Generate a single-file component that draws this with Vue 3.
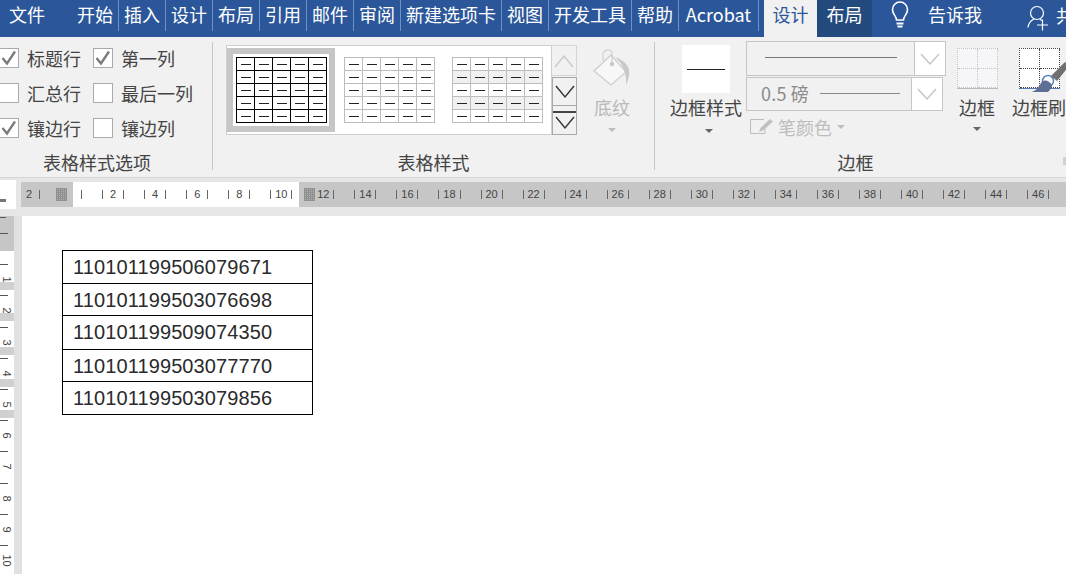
<script setup>
const tabsLeft = [
  { t: '开始', w: 47 }, { t: '插入', w: 47 }, { t: '设计', w: 47 }, { t: '布局', w: 47 },
  { t: '引用', w: 47 }, { t: '邮件', w: 47 }, { t: '审阅', w: 47 }, { t: '新建选项卡', w: 101 },
  { t: '视图', w: 47 }, { t: '开发工具', w: 83 }, { t: '帮助', w: 47 }, { t: 'Acrobat', w: 80 }
]
const rows = ['110101199506079671', '110101199503076698', '110101199509074350', '110101199503077770', '110101199503079856']
const heights = [33, 32, 34, 32, 33]
const hNums = ['2', '', ...Array.from({ length: 23 }, (_, i) => String((i + 1) * 2))]
const vNums = ['', '1', '2', '3', '4', '5', '6', '7', '8', '9', '10', '']
const bands = [282, 313, 347, 379, 410]
</script>

<template>
  <div class="app">
    <div class="tabs">
      <div class="file">文件</div>
      <div v-for="t in tabsLeft" :key="t.t" class="tab" :style="{ width: t.w + 'px' }">{{ t.t }}</div>
      <div class="tab-active">设计</div>
      <div class="tab-dark">布局</div>
      <svg class="bulb" width="20" height="28" viewBox="0 0 20 28" fill="none" stroke="#fff" stroke-width="1.6">
        <path d="M6.5 19c0-4-4-5.500-4-10.500a7.500 7.500 0 0 1 15 0c0 5-4 6.500-4 10.500z" />
        <path d="M6.500 22.500h7M7.500 25.500h5" stroke-width="2" />
      </svg>
      <div class="tell">告诉我</div>
      <svg class="person" width="26" height="26" viewBox="0 0 26 26" fill="none" stroke="#fff" stroke-width="1.200">
        <circle cx="10" cy="8" r="6.500" />
        <path d="M1 22.500C1.500 18 4 15.500 7 14M13 14.500l2 1M10 20h11M15.500 14.500v11" />
      </svg>
      <div class="share">共</div>
    </div>

    <div class="ribbon">
      <div class="grp grp-opts">
        <div class="opts">
          <div class="opt"><span class="cb"><svg width="18" height="18" viewBox="0 0 18 18"><path d="M2.500 9l4.500 5.500L15 2.500" fill="none" stroke="#7c7c7c" stroke-width="2.400" /></svg></span>标题行</div>
          <div class="opt"><span class="cb"><svg width="18" height="18" viewBox="0 0 18 18"><path d="M2.500 9l4.500 5.500L15 2.500" fill="none" stroke="#7c7c7c" stroke-width="2.400" /></svg></span>第一列</div>
          <div class="opt"><span class="cb"></span>汇总行</div>
          <div class="opt"><span class="cb"></span>最后一列</div>
          <div class="opt"><span class="cb"><svg width="18" height="18" viewBox="0 0 18 18"><path d="M2.500 9l4.500 5.500L15 2.500" fill="none" stroke="#7c7c7c" stroke-width="2.400" /></svg></span>镶边行</div>
          <div class="opt"><span class="cb"></span>镶边列</div>
        </div>
        <div class="grp-label">表格样式选项</div>
      </div>

      <div class="grp grp-styles">
        <div class="gallery-row">
          <div class="gallery">
            <div class="sel">
              <div class="mini black"><div v-for="i in 25" :key="i" class="mc"><i></i></div></div>
            </div>
            <div class="mini grey second"><div v-for="i in 25" :key="i" class="mc"><i></i></div></div>
            <div class="mini grey third banded"><div v-for="i in 25" :key="i" class="mc"><i></i></div></div>
          </div>
          <div class="scroll">
            <div class="sb sb-up"><svg width="22" height="14" viewBox="0 0 22 14"><path d="M2 13L11 2l9 11" fill="none" stroke="#c8c8c8" stroke-width="1.400" /></svg></div>
            <div class="sb sb-down"><svg width="22" height="14" viewBox="0 0 22 14"><path d="M2 1l9 11L20 1" fill="none" stroke="#333" stroke-width="1.400" /></svg></div>
            <div class="sb sb-more"><span class="more-bar"></span><svg width="22" height="14" viewBox="0 0 22 14"><path d="M2 1l9 11L20 1" fill="none" stroke="#333" stroke-width="1.400" /></svg></div>
          </div>
          <div class="shade">
            <svg class="shade-ic" width="38" height="40" viewBox="0 0 38 40" fill="none">
              <path d="M1 24L18 8l15 17-15 13z" fill="#f7f7f7" stroke="#cfcfcf" stroke-width="1.300" />
              <path d="M10 14V6q3-4 6-3 4 1 3 5v9" stroke="#cfcfcf" stroke-width="1.200" />
              <circle cx="19" cy="17" r="2.200" fill="#c8c8c8" />
              <path d="M22 10q10 3 14 12 1 8-3 16 1-13-6-23z" fill="#c9c9c9" />
            </svg>
            <div class="shade-t">底纹</div>
            <span class="arrow light"></span>
          </div>
        </div>
        <div class="grp-label">表格样式</div>
      </div>

      <div class="grp grp-border">
        <div class="border-row">
          <div class="bstyle">
            <div class="swatch"><span></span></div>
            <div class="bstyle-t">边框样式</div>
            <span class="arrow"></span>
          </div>
          <div class="combos">
            <div class="combo c1">
              <div class="combo-main"><span class="line l1"></span></div>
              <div class="combo-drop"><svg width="22" height="14" viewBox="0 0 22 14"><path d="M2 2l9 10 9-10" fill="none" stroke="#c4c4c4" stroke-width="1.400" /></svg></div>
            </div>
            <div class="combo c2">
              <div class="combo-main main2"><span class="weight">0.5 磅</span><span class="line l2"></span></div>
              <div class="combo-drop"><svg width="22" height="14" viewBox="0 0 22 14"><path d="M2 2l9 10 9-10" fill="none" stroke="#c4c4c4" stroke-width="1.400" /></svg></div>
            </div>
            <div class="pen">
              <svg width="24" height="18" viewBox="0 0 24 18" fill="none">
                <path d="M14 1.500H.5v14H15V9" stroke="#bdbdbd" stroke-width="1" />
                <path d="M9 14l1.500-4L20 1l3 2.500L13 12.500z" fill="#c0c0c0" />
              </svg>
              <span class="pen-t">笔颜色</span>
              <span class="arrow light small"></span>
            </div>
          </div>
          <div class="bigbtn b1">
            <div class="bicon dim">
              <i></i><i></i><i></i><i></i>
            </div>
            <div class="big-t">边框</div>
            <span class="arrow"></span>
          </div>
          <div class="bigbtn b2">
            <div class="bicon strong">
              <i></i><i></i><i></i><i></i>
              <svg class="brush" width="40" height="34" viewBox="0 0 40 34">
                <path d="M22 16L36 2l4 4-12 15z" fill="#707070" />
                <circle cx="19" cy="21" r="5.500" fill="#fff" stroke="#5b81bd" stroke-width="1.500" />
                <path d="M2 32c6-1 8-6 10-9 2-3 5-3 8-1s4 4 2 6c-1 2-2 3-3 4z" fill="#5d6f94" />
              </svg>
            </div>
            <div class="big-t">边框刷</div>
          </div>
        </div>
        <div class="grp-label border-label">边框</div>
        <span class="launcher"></span>
      </div>
    </div>

    <div class="hruler-row">
      <div class="corner"><span></span></div>
      <div class="hruler">
        <div v-for="(n, i) in hNums" :key="i" class="hcell">
          <span class="tick"></span><span class="num">{{ n }}</span><span class="tick"></span>
        </div>
        <span class="gridblock gb1"></span>
        <span class="gridblock gb2"></span>
      </div>
    </div>

    <div class="work">
      <div class="vruler">
        <div class="v-top"></div>
        <div v-for="(n, i) in vNums" :key="i" class="vcell"><span class="vnum">{{ n }}</span></div>
        <span class="v-first"></span>
        <span v-for="b in bands" :key="b" class="band" :style="{ top: (b - 216) + 'px' }"></span>
      </div>
      <div class="gutter"></div>
      <div class="page">
        <div class="doc-table">
          <div v-for="(r, i) in rows" :key="r" class="doc-row" :style="{ height: heights[i] + 'px' }">{{ r }}</div>
        </div>
      </div>
    </div>
  </div>
</template>

<style>
html, body { margin: 0; padding: 0; overflow: hidden; background: #fff; }
</style>

<style scoped>
.app { width: 1066px; height: 574px; overflow: hidden; font-family: "Noto Sans CJK SC", "Liberation Sans", sans-serif; font-size: 18px; color: #444; display: flex; flex-direction: column; }
.tabs { height: 37px; background: #2b579a; display: flex; color: #fff; flex: none; }
.tabs > * { flex: none; }
.file { width: 72px; padding-left: 9px; box-sizing: border-box; line-height: 28px; }
.tab { height: 31px; line-height: 28px; text-align: center; border-right: 1px solid #6d93c6; box-sizing: border-box; white-space: nowrap; }
.tab-active { width: 53px; margin-left: 5px; background: #f1f1f1; color: #2b579a; text-align: center; line-height: 28px; }
.tab-dark { width: 55px; background: #234a7d; text-align: center; line-height: 28px; }
.bulb { margin: 1px 0 0 18px; }
.tell { margin-left: 18px; width: 56px; line-height: 28px; white-space: nowrap; }
.person { margin: 5px 0 0 43px; }
.share { margin-left: 3px; line-height: 30px; white-space: nowrap; }

.ribbon { height: 140px; background: #f1f1f1; border-bottom: 1px solid #d4d4d4; display: flex; flex: none; }
.grp { position: relative; box-sizing: border-box; height: 128px; margin-top: 5px; flex: none; }
.grp-label { position: absolute; left: 0; right: 0; top: 108px; text-align: center; line-height: 24px; white-space: nowrap; }
.grp-opts { width: 213px; border-right: 1px solid #c6c6c6; }
.opts { display: grid; grid-template-columns: 94px 100px; grid-auto-rows: 35px; margin: 6px 0 0 -1px; white-space: nowrap; }
.opt { display: flex; align-items: center; line-height: 20px; height: 20px; }
.cb { width: 18px; height: 18px; border: 1px solid #aaa; background: #fff; margin-right: 8px; flex: none; display: block; }
.cb svg { display: block; }
.grp-opts .grp-label { left: 43px; right: auto; }

.grp-styles { width: 442px; border-right: 1px solid #c6c6c6; }
.gallery-row { display: flex; margin: 3px 0 0 13px; }
.gallery { width: 326px; height: 90px; box-sizing: border-box; border: 1px solid #cfcfcf; background: #fff; display: flex; align-items: flex-start; flex: none; }
.sel { width: 108px; height: 84px; box-sizing: border-box; border: 6px solid #c6c6c6; margin: 2px 0 0 0; padding: 3px; flex: none; background: #fff; }
.mini { width: 91px; height: 66px; display: grid; grid-template-columns: repeat(5, 18px); grid-auto-rows: 13px; border-top: 1px solid; border-left: 1px solid; box-sizing: border-box; flex: none; background: #fff; }
.mini.black { border-color: #000; }
.mini.grey { border-color: #bdbdbd; margin-top: 11px; }
.second { margin-left: 9px; }
.third { margin-left: 17px; }
.mc { border-right: 1px solid; border-bottom: 1px solid; box-sizing: border-box; display: flex; align-items: center; justify-content: center; height: 13px; }
.black .mc { border-color: #000; }
.grey .mc { border-color: #bdbdbd; }
.mc i { display: block; width: 10px; height: 1px; background: #222; }
.banded .mc:nth-child(n+6):nth-child(-n+10), .banded .mc:nth-child(n+16):nth-child(-n+20) { background: #f0f0f0; }
.scroll { width: 25px; height: 90px; display: flex; flex-direction: column; flex: none; }
.sb { box-sizing: border-box; border: 1px solid #c4c4c4; display: flex; align-items: center; justify-content: center; width: 25px; }
.sb-up { height: 31px; background: #f1f1f1; border-color: #d4d4d4; border-left: 0; }
.sb-down { height: 29px; border-color: #a9a9a9; margin-top: 1px; }
.sb-more { height: 29px; border-color: #a9a9a9; flex-direction: column; border-top: 0; }
.more-bar { display: block; width: 23px; height: 2px; background: #444; margin: 0 0 3px; }
.shade { width: 60px; margin-left: 5px; display: flex; flex-direction: column; align-items: center; color: #b9b9b9; flex: none; }
.shade-ic { margin-top: 2px; flex: none; }
.shade-t { line-height: 24px; margin-top: 8px; }
.arrow { display: block; width: 0; height: 0; border-left: 4px solid transparent; border-right: 4px solid transparent; border-top: 4px solid #666; margin-top: 9px; }
.arrow.light { border-top-color: #bdbdbd; }
.arrow.small { margin: 0 0 0 5px; }

.grp-border { width: 411px; }
.border-row { display: flex; }
.bstyle { width: 102px; display: flex; flex-direction: column; align-items: center; margin-top: 3px; flex: none; }
.bstyle .arrow { margin: 10px 0 0 6px; }
.swatch { width: 48px; height: 48px; background: #fff; display: flex; align-items: center; justify-content: center; }
.swatch span { display: block; width: 38px; height: 1px; background: #222; }
.bstyle-t { line-height: 24px; margin-top: 2px; white-space: nowrap; }
.combos { width: 200px; margin-left: -11px; flex: none; position: relative; top: -1px; }
.combo { display: flex; border: 1px solid #c6c6c6; box-sizing: border-box; background: #f1f1f1; }
.c1 { width: 200px; height: 35px; }
.c2 { width: 197px; height: 34px; margin-top: 1px; }
.combo-main { flex: 1; display: flex; align-items: center; padding-left: 14px; background: #f1f1f1; }
.main2 { padding-bottom: 2px; }
.combo-drop { width: 30px; background: #fff; border-left: 1px solid #c6c6c6; display: flex; align-items: center; justify-content: center; flex: none; }
.line { display: block; height: 1px; background: #777; }
.l1 { width: 132px; margin-left: 4px; margin-top: -3px; }
.l2 { width: 80px; margin-left: 11px; background: #888; }
.weight { color: #8a8a8a; line-height: 24px; white-space: nowrap; letter-spacing: .2px; }
.pen { display: flex; align-items: center; height: 24px; margin: 4px 0 0 4px; color: #bdbdbd; }
.pen-t { margin-left: 4px; white-space: nowrap; }
.bigbtn { display: flex; flex-direction: column; align-items: center; flex: none; position: relative; }
.bigbtn .arrow { margin-top: 8px; }
.b1 { width: 60px; margin-left: 1px; margin-top: 6px; }
.b2 { width: 60px; margin-left: 2px; margin-top: 6px; }
.bicon { width: 41px; height: 41px; display: grid; grid-template-columns: 1fr 1fr; grid-template-rows: 1fr 1fr; box-sizing: border-box; position: relative; }
.bicon i { display: block; border-right: 1px dotted; border-bottom: 1px dotted; box-sizing: border-box; }
.dim { background: #f6f6f8; border-left: 1px dotted #c4c4c4; border-top: 1px dotted #c4c4c4; border-bottom: 1px solid #bbb; }
.dim i { border-color: #c4c4c4; }
.strong { background: #fff; border-left: 1px dotted #444; border-top: 1px dotted #444; border-bottom: 1px solid #5b7cb0; }
.strong i { border-color: #444; }
.brush { position: absolute; left: 9px; top: 11px; overflow: visible; }
.big-t { line-height: 24px; margin-top: 6px; white-space: nowrap; }
.border-label { right: 10px; }
.launcher { position: absolute; right: 0; top: 115px; width: 3px; height: 8px; background: #d0d0d0; }

.hruler-row { height: 38px; background: #e6e6e6; display: flex; flex: none; box-sizing: border-box; padding-top: 4px; align-items: flex-start; }
.corner { width: 16px; height: 29px; margin-top: -2px; background: #fff; flex: none; display: flex; align-items: flex-end; }
.corner span { display: block; width: 6px; height: 3px; background: #777; margin-bottom: 7px; }
.hruler { margin-left: 5px; width: 1045px; height: 25px; position: relative; overflow: hidden; display: flex; background: linear-gradient(90deg, #c6c6c6 0, #c6c6c6 52px, #fff 52px, #fff 278px, #c6c6c6 278px); }
.hcell { width: 42.05px; flex: none; display: flex; justify-content: space-between; align-items: center; padding: 0 10px; box-sizing: border-box; position: relative; left: -13px; font: 11px "Liberation Sans", sans-serif; color: #444; }
.tick { display: block; width: 1px; height: 9px; background: #666; }
.num { line-height: 11px; }
.gridblock { position: absolute; top: 6px; width: 11px; height: 13px; background-color: #b0b0b0; background-image: repeating-linear-gradient(0deg, #8f8f8f 0 1px, transparent 1px 2px), repeating-linear-gradient(90deg, #8f8f8f 0 1px, transparent 1px 2px); }
.gb1 { left: 35px; }
.gb2 { left: 283px; }

.work { flex: 1; display: flex; min-height: 0; }
.vruler { width: 14px; position: relative; background: #fff; flex: none; overflow: hidden; }
.v-top { height: 35px; background: #c6c6c6; margin-bottom: -35px; }
.v-first { position: absolute; left: 0; top: 1px; width: 6px; height: 1px; background: #555; }
.vcell { height: 31.2px; box-sizing: border-box; position: relative; }
.vcell::before { content: ""; position: absolute; left: 0; top: 17px; width: 8px; height: 1px; background: #555; }
.vnum { position: absolute; left: 0; top: 24px; width: 14px; height: 17px; display: flex; align-items: center; justify-content: center; font: 11px "Liberation Sans", sans-serif; color: #444; transform: rotate(90deg); }
.band { position: absolute; left: 0; width: 14px; height: 8px; background: #d0d0d0; }
.gutter { width: 8px; background: #e1e1e1; flex: none; }
.page { flex: 1; background: #fff; padding: 34px 0 0 40px; }
.doc-table { width: 251px; border-top: 1px solid #000; border-left: 1px solid #000; border-right: 1px solid #000; box-sizing: border-box; }
.doc-row { border-bottom: 1px solid #000; box-sizing: border-box; padding-left: 10px; font: 20px/32px "Liberation Sans", sans-serif; letter-spacing: .11px; color: #2a2a2a; white-space: nowrap; }
</style>
